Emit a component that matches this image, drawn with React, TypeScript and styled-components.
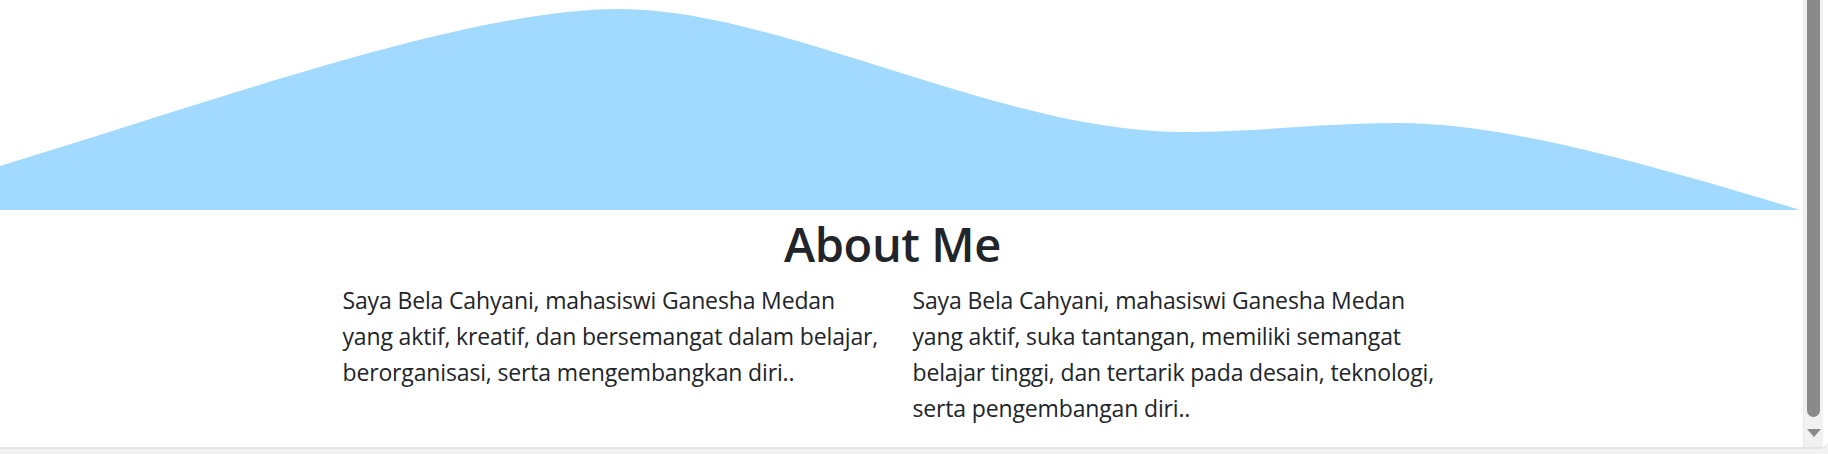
import React from "react";
import styled, { createGlobalStyle } from "styled-components";

const GlobalStyle = createGlobalStyle`
  html, body {
    margin: 0;
    padding: 0;
    background: #f3f3f3;
  }
  body {
    font-family: "Open Sans", "Liberation Sans", sans-serif;
    color: #212529;
  }
`;

const leftLines = [
  "Saya Bela Cahyani, mahasiswi Ganesha Medan",
  "yang aktif, kreatif, dan bersemangat dalam belajar,",
  "berorganisasi, serta mengembangkan diri..",
];

const rightLines = [
  "Saya Bela Cahyani, mahasiswi Ganesha Medan",
  "yang aktif, suka tantangan, memiliki semangat",
  "belajar tinggi, dan tertarik pada desain, teknologi,",
  "serta pengembangan diri..",
];

const App = () => {
  return (
    <>
      <GlobalStyle />
      <Frame>
        <Viewport>
          <Page>
            <Wave viewBox="0 0 1800 210" preserveAspectRatio="none">
              <path
                fill="#a2d9ff"
                d="M0,166 C230,96 470,9 620,9 C780,9 1000,132 1182,132 C1260,132 1320,123 1398,123 C1490,123 1610,152 1800,210 L0,210 Z"
              />
            </Wave>
            <About>
              <Title>About Me</Title>
              <Columns>
                <Paragraph>
                  {leftLines.map((l, i) => (
                    <Line key={i}>{l}</Line>
                  ))}
                </Paragraph>
                <Paragraph>
                  {rightLines.map((l, i) => (
                    <Line key={i}>{l}</Line>
                  ))}
                </Paragraph>
              </Columns>
            </About>
          </Page>
          <Scrollbar>
            <Thumb />
            <ArrowDown />
          </Scrollbar>
          <Edge />
        </Viewport>
      </Frame>
    </>
  );
};

const Frame = styled.div`
  width: 1828px;
  height: 454px;
  display: flex;
  flex-direction: column;
  overflow: hidden;
  background: #f3f3f3;
`;

const Viewport = styled.div`
  height: 447px;
  display: flex;
  background: #fff;
  border-bottom: 2px solid #e4e4e4;
  border-bottom-right-radius: 8px;
  overflow: hidden;
`;

const Page = styled.div`
  flex: 1;
  min-width: 0;
  display: flex;
  flex-direction: column;
`;

const Wave = styled.svg`
  display: block;
  width: 1800px;
  height: 210px;
  flex: none;
`;

const About = styled.section`
  width: 1100px;
  margin-left: calc(50% - 559px);
`;

const Title = styled.h1`
  margin: 6px 0 0;
  text-align: center;
  font-size: 47px;
  font-weight: 600;
  line-height: 56px;
  letter-spacing: -0.4px;
`;

const Columns = styled.div`
  display: grid;
  grid-template-columns: 540px 530px;
  column-gap: 30px;
  margin-top: 10px;
`;

const Paragraph = styled.p`
  margin: 0;
  font-size: 23px;
  line-height: 36px;
  letter-spacing: -0.15px;
`;

const Line = styled.span`
  display: block;
  white-space: nowrap;
`;

const Scrollbar = styled.div`
  width: 20px;
  display: flex;
  flex-direction: column;
  align-items: center;
  background: #f1f1f1;
  border-left: 1px solid #e9e9e9;
  box-sizing: border-box;
  padding-bottom: 10px;
`;

const Thumb = styled.div`
  flex: 1;
  width: 13px;
  background: #8a8a8a;
  border-radius: 0 0 7px 7px;
`;

const ArrowDown = styled.div`
  margin-top: 12px;
  width: 0;
  height: 0;
  border-left: 7px solid transparent;
  border-right: 7px solid transparent;
  border-top: 8px solid #8a8a8a;
`;

const Edge = styled.div`
  width: 5px;
  background: #fff;
`;

export default App;
